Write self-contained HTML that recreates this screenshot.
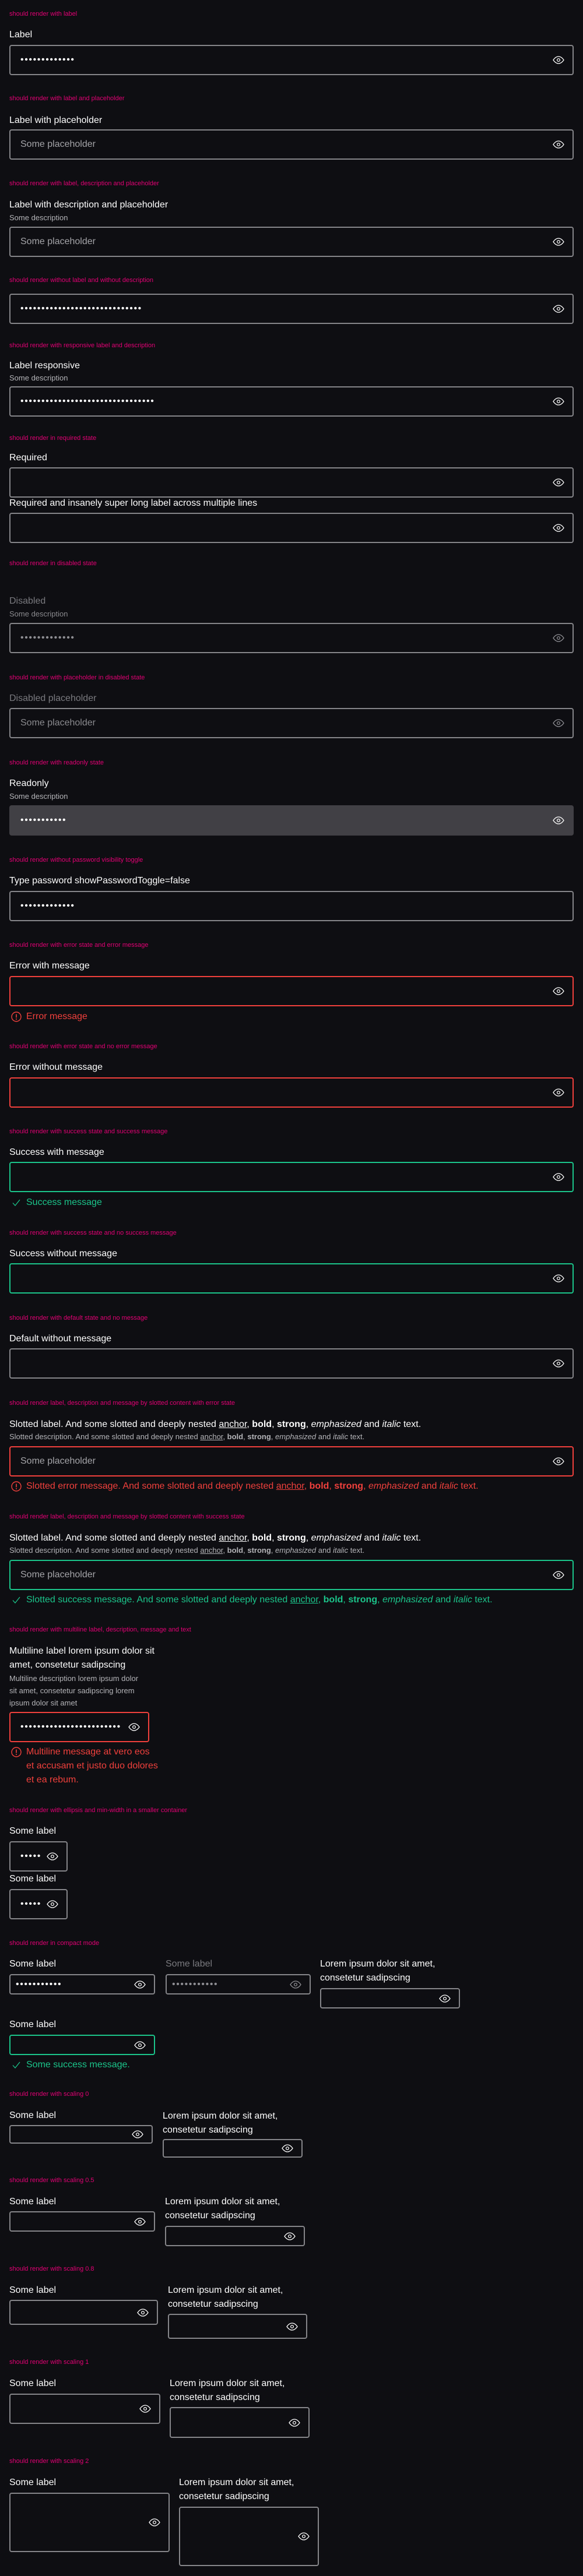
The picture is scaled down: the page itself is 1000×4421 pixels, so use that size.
<!DOCTYPE html>
<html><head><meta charset="utf-8"><style>
*{margin:0;padding:0}
html,body{width:1000px;height:4421px;background:#0e0e12;overflow:hidden}
body{position:relative;font-family:"Liberation Sans",sans-serif}
.h{position:absolute;left:16px;font-size:11px;line-height:16px;color:#e20074;white-space:nowrap}
.l{position:absolute;left:16px;font-size:16px;line-height:24px;color:#fff;white-space:nowrap}
.l.dis{color:#7a7a7f}
.d{position:absolute;left:16px;font-size:13px;line-height:20px;color:#b4b4b8;white-space:nowrap}
.in{position:absolute;left:16px;width:968px;height:52px;border:2px solid #858589;border-radius:4px;box-sizing:border-box;display:flex;align-items:center;padding-left:17px}
.in.c{padding-left:9px}
.in.err{border-color:#f0403c}
.in.ok{border-color:#1bc48a}
.in.ro{background:#414045;border-color:#414045}
.dt{color:#fff;font-size:16px;letter-spacing:1.6px;line-height:16px}
.dt.g{color:#8e8e93}
.ph{color:#a4a4a8;font-size:16px}
.ph.g{color:#8a8a8e}
.eye{position:absolute;right:14px;top:50%;margin-top:-7px}
.msg{position:absolute;left:45px;font-size:16px;line-height:24px;white-space:nowrap}
.msg.e{color:#f0403c}.msg.s{color:#1bc48a}
.ic{position:absolute;left:19px}
a{color:inherit;text-decoration:underline}
</style></head><body>
<svg width="0" height="0" style="position:absolute"><defs>
<symbol id="eye" viewBox="0 0 20 14"><path d="M1 7C4 2.5 7 1 10 1s6 1.5 9 6c-3 4.5-6 6-9 6S4 11.5 1 7Z" fill="none" stroke="currentColor" stroke-width="1.3"/><circle cx="10" cy="7" r="2.4" fill="none" stroke="currentColor" stroke-width="1.3"/></symbol>
<symbol id="err" viewBox="0 0 18 18"><circle cx="9" cy="9" r="8" fill="none" stroke="#f0403c" stroke-width="1.4"/><path d="M9 4.5v6" stroke="#f0403c" stroke-width="1.6"/><circle cx="9" cy="13" r="1" fill="#f0403c"/></symbol>
<symbol id="chk" viewBox="0 0 14 12"><path d="M1 6.5 5 11 13 1" fill="none" stroke="#1bc48a" stroke-width="1.3"/></symbol>
</defs></svg>

<div class="h" style="top:16px">should render with label</div>
<div class="l" style="top:48px">Label</div>
<div class="in" style="top:77px"><span class="dt">•••••••••••••</span><svg class="eye" width="20" height="14" style="color:#fff"><use href="#eye"/></svg></div>

<div class="h" style="top:161px">should render with label and placeholder</div>
<div class="l" style="top:195px">Label with placeholder</div>
<div class="in" style="top:222px"><span class="ph">Some placeholder</span><svg class="eye" width="20" height="14" style="color:#fff"><use href="#eye"/></svg></div>

<div class="h" style="top:307px">should render with label, description and placeholder</div>
<div class="l" style="top:340px">Label with description and placeholder</div>
<div class="d" style="top:364px">Some description</div>
<div class="in" style="top:389px"><span class="ph">Some placeholder</span><svg class="eye" width="20" height="14" style="color:#fff"><use href="#eye"/></svg></div>

<div class="h" style="top:473px">should render without label and without description</div>
<div class="in" style="top:504px"><span class="dt">•••••••••••••••••••••••••••••</span><svg class="eye" width="20" height="14" style="color:#fff"><use href="#eye"/></svg></div>

<div class="h" style="top:585px">should render with responsive label and description</div>
<div class="l" style="top:616px">Label responsive</div>
<div class="d" style="top:639px">Some description</div>
<div class="in" style="top:663px"><span class="dt">••••••••••••••••••••••••••••••••</span><svg class="eye" width="20" height="14" style="color:#fff"><use href="#eye"/></svg></div>

<div class="h" style="top:744px">should render in required state</div>
<div class="l" style="top:774px">Required</div>
<div class="in" style="top:802px"><svg class="eye" width="20" height="14" style="color:#fff"><use href="#eye"/></svg></div>
<div class="l" style="top:852px">Required and insanely super long label across multiple lines</div>
<div class="in" style="top:880px"><svg class="eye" width="20" height="14" style="color:#fff"><use href="#eye"/></svg></div>

<div class="h" style="top:959px">should render in disabled state</div>
<div class="l dis" style="top:1020px">Disabled</div>
<div class="d" style="top:1044px;color:#8a8a8e">Some description</div>
<div class="in" style="top:1069px"><span class="dt g">•••••••••••••</span><svg class="eye" width="20" height="14" style="color:#8e8e93"><use href="#eye"/></svg></div>

<div class="h" style="top:1155px">should render with placeholder in disabled state</div>
<div class="l dis" style="top:1187px">Disabled placeholder</div>
<div class="in" style="top:1215px"><span class="ph g">Some placeholder</span><svg class="eye" width="20" height="14" style="color:#8e8e93"><use href="#eye"/></svg></div>

<div class="h" style="top:1301px">should render with readonly state</div>
<div class="l" style="top:1333px">Readonly</div>
<div class="d" style="top:1357px">Some description</div>
<div class="in ro" style="top:1382px"><span class="dt">•••••••••••</span><svg class="eye" width="20" height="14" style="color:#fff"><use href="#eye"/></svg></div>

<div class="h" style="top:1468px">should render without password visibility toggle</div>
<div class="l" style="top:1500px">Type password showPasswordToggle=false</div>
<div class="in" style="top:1529px"><span class="dt">•••••••••••••</span></div>

<div class="h" style="top:1614px">should render with error state and error message</div>
<div class="l" style="top:1646px">Error with message</div>
<div class="in err" style="top:1675px"><svg class="eye" width="20" height="14" style="color:#fff"><use href="#eye"/></svg></div>
<svg class="ic" width="18" height="18" style="top:1736px"><use href="#err"/></svg>
<div class="msg e" style="top:1733px">Error message</div>

<div class="h" style="top:1788px">should render with error state and no error message</div>
<div class="l" style="top:1820px">Error without message</div>
<div class="in err" style="top:1849px"><svg class="eye" width="20" height="14" style="color:#fff"><use href="#eye"/></svg></div>

<div class="h" style="top:1934px">should render with success state and success message</div>
<div class="l" style="top:1966px">Success with message</div>
<div class="in ok" style="top:1994px"><svg class="eye" width="20" height="14" style="color:#fff"><use href="#eye"/></svg></div>
<svg class="ic" width="14" height="12" style="top:2058px;left:21px"><use href="#chk"/></svg>
<div class="msg s" style="top:2052px">Success message</div>

<div class="h" style="top:2108px">should render with success state and no success message</div>
<div class="l" style="top:2140px">Success without message</div>
<div class="in ok" style="top:2168px"><svg class="eye" width="20" height="14" style="color:#fff"><use href="#eye"/></svg></div>

<div class="h" style="top:2254px">should render with default state and no message</div>
<div class="l" style="top:2286px">Default without message</div>
<div class="in" style="top:2314px"><svg class="eye" width="20" height="14" style="color:#fff"><use href="#eye"/></svg></div>

<div class="h" style="top:2400px">should render label, description and message by slotted content with error state</div>
<div class="l" style="top:2433px">Slotted label. And some slotted and deeply nested <a>anchor</a>, <b>bold</b>, <strong>strong</strong>, <em>emphasized</em> and <i>italic</i> text.</div>
<div class="d" style="top:2456px">Slotted description. And some slotted and deeply nested <a>anchor</a>, <b>bold</b>, <strong>strong</strong>, <em>emphasized</em> and <i>italic</i> text.</div>
<div class="in err" style="top:2482px"><span class="ph">Some placeholder</span><svg class="eye" width="20" height="14" style="color:#fff"><use href="#eye"/></svg></div>
<svg class="ic" width="18" height="18" style="top:2542px"><use href="#err"/></svg>
<div class="msg e" style="top:2539px">Slotted error message. And some slotted and deeply nested <a>anchor</a>, <b>bold</b>, <strong>strong</strong>, <em>emphasized</em> and <i>italic</i> text.</div>

<div class="h" style="top:2595px">should render label, description and message by slotted content with success state</div>
<div class="l" style="top:2628px">Slotted label. And some slotted and deeply nested <a>anchor</a>, <b>bold</b>, <strong>strong</strong>, <em>emphasized</em> and <i>italic</i> text.</div>
<div class="d" style="top:2651px">Slotted description. And some slotted and deeply nested <a>anchor</a>, <b>bold</b>, <strong>strong</strong>, <em>emphasized</em> and <i>italic</i> text.</div>
<div class="in ok" style="top:2677px"><span class="ph">Some placeholder</span><svg class="eye" width="20" height="14" style="color:#fff"><use href="#eye"/></svg></div>
<svg class="ic" width="14" height="12" style="top:2740px;left:21px"><use href="#chk"/></svg>
<div class="msg s" style="top:2734px">Slotted success message. And some slotted and deeply nested <a>anchor</a>, <b>bold</b>, <strong>strong</strong>, <em>emphasized</em> and <i>italic</i> text.</div>

<div class="h" style="top:2789px">should render with multiline label, description, message and text</div>
<div class="l" style="top:2822px">Multiline label lorem ipsum dolor sit<br>amet, consetetur sadipscing</div>
<div class="d" style="top:2870px;line-height:21px">Multiline description lorem ipsum dolor<br>sit amet, consetetur sadipscing lorem<br>ipsum dolor sit amet</div>
<div class="in err" style="top:2938px;width:240px"><span class="dt">••••••••••••••••••••••••</span><svg class="eye" width="20" height="14" style="color:#fff"><use href="#eye"/></svg></div>
<svg class="ic" width="18" height="18" style="top:2998px"><use href="#err"/></svg>
<div class="msg e" style="top:2995px">Multiline message at vero eos<br>et accusam et justo duo dolores<br>et ea rebum.</div>

<div class="h" style="top:3099px">should render with ellipsis and min-width in a smaller container</div>
<div class="l" style="top:3131px">Some label</div>
<div class="in" style="top:3160px;width:100px"><span class="dt">•••••</span><svg class="eye" width="20" height="14" style="color:#fff"><use href="#eye"/></svg></div>
<div class="l" style="top:3213px">Some label</div>
<div class="in" style="top:3242px;width:100px"><span class="dt">•••••</span><svg class="eye" width="20" height="14" style="color:#fff"><use href="#eye"/></svg></div>

<div class="h" style="top:3327px">should render in compact mode</div>
<div class="l" style="top:3359px">Some label</div>
<div class="in c" style="top:3388px;width:250px;height:35px"><span class="dt">•••••••••••</span><svg class="eye" width="20" height="14" style="color:#fff"><use href="#eye"/></svg></div>
<div class="l dis" style="top:3359px;left:284px">Some label</div>
<div class="in c" style="top:3388px;left:284px;width:249px;height:35px"><span class="dt g">•••••••••••</span><svg class="eye" width="20" height="14" style="color:#8e8e93"><use href="#eye"/></svg></div>
<div class="l" style="top:3359px;left:549px">Lorem ipsum dolor sit amet,<br>consetetur sadipscing</div>
<div class="in c" style="top:3412px;left:549px;width:240px;height:35px"><svg class="eye" width="20" height="14" style="color:#fff"><use href="#eye"/></svg></div>
<div class="l" style="top:3463px">Some label</div>
<div class="in c ok" style="top:3492px;width:250px;height:35px"><svg class="eye" width="20" height="14" style="color:#fff"><use href="#eye"/></svg></div>
<svg class="ic" width="14" height="12" style="top:3538px;left:21px"><use href="#chk"/></svg>
<div class="msg s" style="top:3532px">Some success message.</div>

<div class="h" style="top:3586px">should render with scaling 0</div>
<div class="l" style="top:3619px">Some label</div>
<div class="in c" style="top:3647px;width:246px;height:32px"><svg class="eye" width="20" height="14" style="color:#fff"><use href="#eye"/></svg></div>
<div class="l" style="top:3620px;left:279px">Lorem ipsum dolor sit amet,<br>consetetur sadipscing</div>
<div class="in c" style="top:3671px;left:279px;width:240px;height:32px"><svg class="eye" width="20" height="14" style="color:#fff"><use href="#eye"/></svg></div>

<div class="h" style="top:3734px">should render with scaling 0.5</div>
<div class="l" style="top:3767px">Some label</div>
<div class="in c" style="top:3795px;width:250px;height:35px"><svg class="eye" width="20" height="14" style="color:#fff"><use href="#eye"/></svg></div>
<div class="l" style="top:3767px;left:283px">Lorem ipsum dolor sit amet,<br>consetetur sadipscing</div>
<div class="in c" style="top:3820px;left:283px;width:240px;height:35px"><svg class="eye" width="20" height="14" style="color:#fff"><use href="#eye"/></svg></div>

<div class="h" style="top:3886px">should render with scaling 0.8</div>
<div class="l" style="top:3919px">Some label</div>
<div class="in c" style="top:3947px;width:255px;height:43px"><svg class="eye" width="20" height="14" style="color:#fff"><use href="#eye"/></svg></div>
<div class="l" style="top:3919px;left:288px">Lorem ipsum dolor sit amet,<br>consetetur sadipscing</div>
<div class="in c" style="top:3971px;left:288px;width:239px;height:43px"><svg class="eye" width="20" height="14" style="color:#fff"><use href="#eye"/></svg></div>

<div class="h" style="top:4046px">should render with scaling 1</div>
<div class="l" style="top:4079px">Some label</div>
<div class="in" style="top:4108px;width:259px;height:52px"><svg class="eye" width="20" height="14" style="color:#fff"><use href="#eye"/></svg></div>
<div class="l" style="top:4079px;left:291px">Lorem ipsum dolor sit amet,<br>consetetur sadipscing</div>
<div class="in" style="top:4131px;left:291px;width:240px;height:53px"><svg class="eye" width="20" height="14" style="color:#fff"><use href="#eye"/></svg></div>

<div class="h" style="top:4216px">should render with scaling 2</div>
<div class="l" style="top:4249px">Some label</div>
<div class="in" style="top:4278px;width:275px;height:102px"><svg class="eye" width="20" height="14" style="color:#fff"><use href="#eye"/></svg></div>
<div class="l" style="top:4249px;left:307px">Lorem ipsum dolor sit amet,<br>consetetur sadipscing</div>
<div class="in" style="top:4302px;left:307px;width:240px;height:102px"><svg class="eye" width="20" height="14" style="color:#fff"><use href="#eye"/></svg></div>
</body></html>
